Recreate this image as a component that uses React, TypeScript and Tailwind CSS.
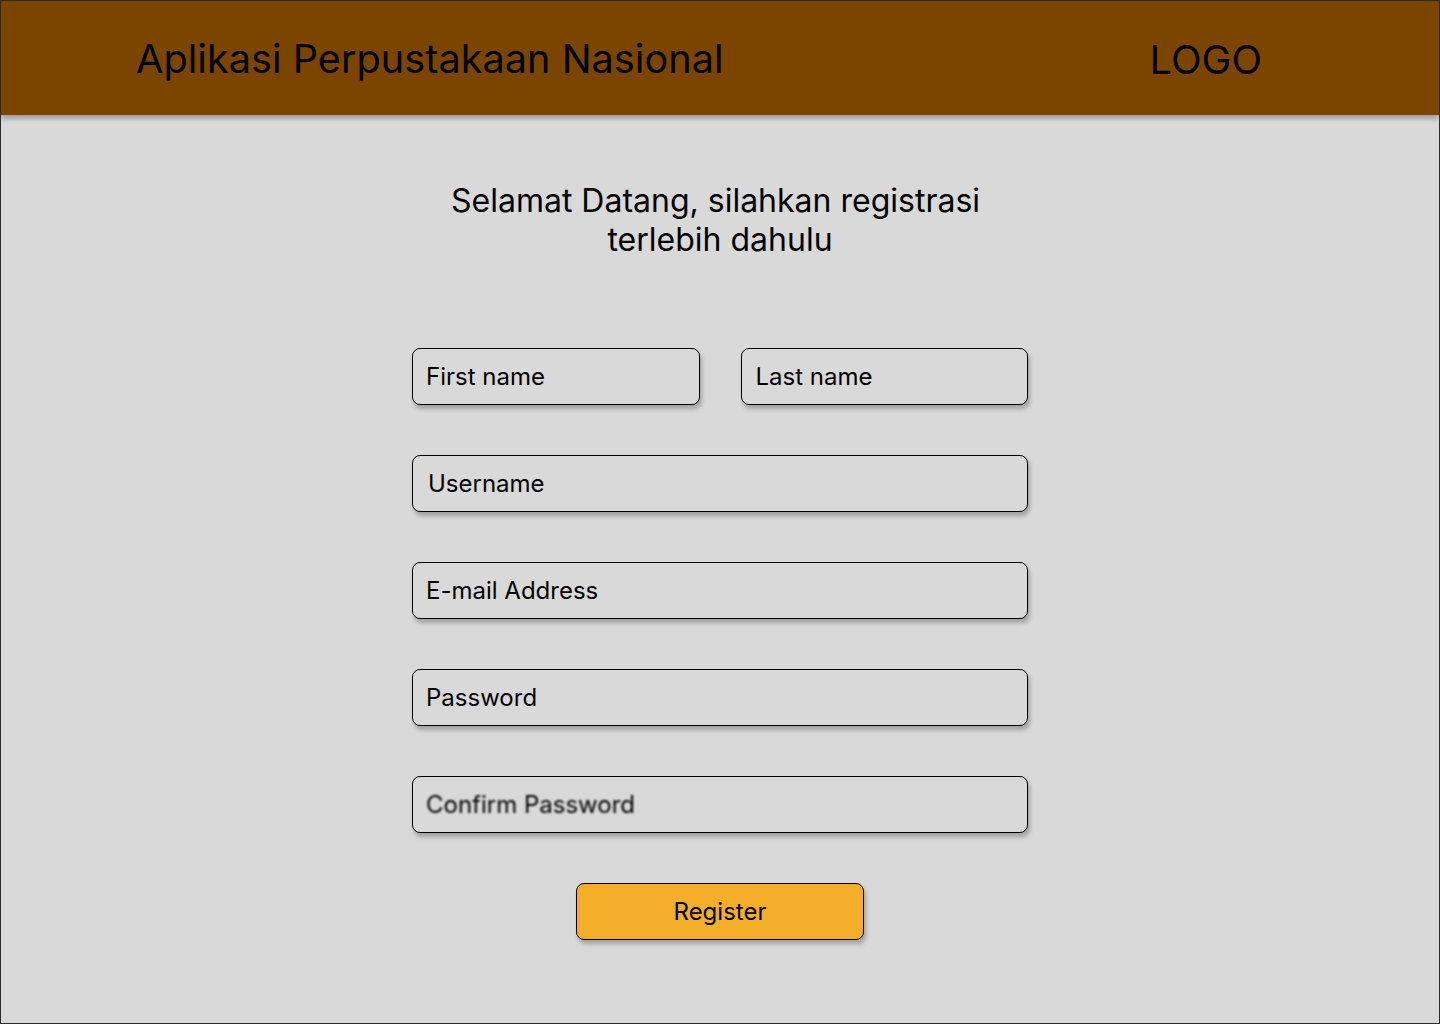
import React from 'react';

const font = { fontFamily: 'Inter, "Noto Sans", sans-serif' };

const Field: React.FC<{ label: string; className?: string; textClass?: string }> = ({ label, className = '', textClass = '' }) => (
    <div
        className={`h-[57px] flex items-center px-[13px] bg-[#d9d9d9] border border-black rounded-[8px] shadow-[2px_4px_4px_rgba(0,0,0,0.25)] ${className}`}
    >
        <span className={`text-[24px] text-black ${textClass}`}>{label}</span>
    </div>
);

const App: React.FC = () => {
    return (
        <div style={font} className="w-[1440px] h-[1024px] bg-[#d9d9d9] border border-[#2b2b2b] flex flex-col overflow-hidden">
            {/* Header */}
            <header className="h-[114px] shrink-0 bg-[#7b4500] flex items-center justify-between pt-[3px] pl-[135px] pr-[177px] shadow-[0_4px_4px_rgba(0,0,0,0.25)] relative z-10">
                <h1 className="text-[39.7px] text-black leading-none">Aplikasi Perpustakaan Nasional</h1>
                <span className="text-[40px] text-black leading-none">LOGO</span>
            </header>

            {/* Form */}
            <main className="flex flex-col items-center">
                <p className="mt-[66px] text-[32px] leading-[39px] text-black text-center">
                    <span className="pr-[9px]">Selamat Datang, silahkan registrasi</span>
                    <br />
                    terlebih dahulu
                </p>

                <div className="mt-[89px] w-[616px] flex flex-col gap-[50px]">
                    <div className="flex gap-[41px]">
                        <Field label="First name" className="w-[288px]" />
                        <Field label="Last name" className="w-[288px] px-[14px]" />
                    </div>
                    <Field label="Username" className="px-[15px]" />
                    <Field label="E-mail Address" />
                    <Field label="Password" />
                    <Field label="Confirm Password" textClass="text-[#333] blur-[1px]" />
                    <div className="flex justify-center">
                        <button className="w-[288px] h-[57px] bg-[#f5ae2a] border border-black rounded-[8px] shadow-[2px_4px_4px_rgba(0,0,0,0.25)] text-[24px] text-black">
                            Register
                        </button>
                    </div>
                </div>
            </main>
        </div>
    );
};

export default App;
